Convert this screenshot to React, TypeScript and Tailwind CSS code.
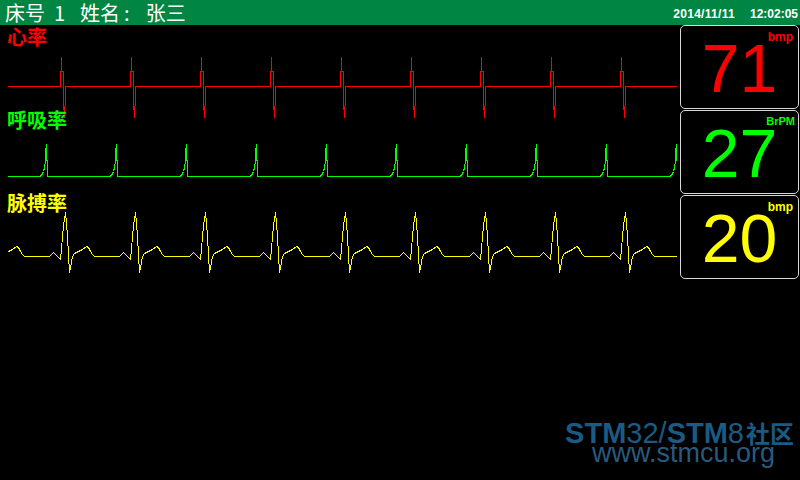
import { useMemo } from 'react'

type Pt = [number, number]

// wave shapes, x relative to each beat's anchor
const HEART_BEAT: Pt[] = [[0, 86], [0, 71], [1, 71], [1, 56], [1, 71], [3, 71], [3, 101], [4, 117], [5, 94], [5, 86]]
const RESP_BEAT: Pt[] = [[-7, 176], [-5, 175], [-4, 173], [-3, 171], [-2, 167], [-1, 160], [-1, 152], [0, 144], [0, 160], [1, 160], [1, 176]]
const PULSE_BEAT: Pt[] = [
  [-16, 256], [-12, 252], [-8, 256], [-5, 259], [-4, 248], [-2, 225], [0, 212], [2, 235], [3, 255], [4, 272],
  [6, 262], [7, 256], [9, 253], [13, 251], [17, 249], [21, 246], [23, 247], [25, 251], [27, 254], [29, 256],
]

function buildTrace(beat: Pt[], first: number, count: number, baseline: number) {
  const pts: Pt[] = [[0, baseline]]
  for (let k = 0; k < count; k++) {
    const x0 = first + k * 70
    beat.forEach(([dx, y]) => pts.push([x0 + dx, y]))
  }
  pts.push([720, baseline])
  return pts.map(([x, y]) => `${x + 0.5},${y + 0.5}`).join(' ')
}

interface TraceProps {
  id: string
  color: string
  points: string
  top: number
  height: number
}

function Trace({ id, color, points, top, height }: TraceProps) {
  return (
    <svg width={680} height={height} viewBox={`0 ${top} 680 ${height}`} className="block overflow-visible shrink-0">
      <defs>
        <clipPath id={id}>
          <rect x={8} y={-200} width={669} height={800} />
        </clipPath>
      </defs>
      <polyline
        points={points}
        fill="none"
        stroke={color}
        strokeWidth={1}
        shapeRendering="crispEdges"
        clipPath={`url(#${id})`}
      />
    </svg>
  )
}

interface ChannelProps {
  id: string
  label: string
  color: string
  points: string
  top: number
}

function Channel({ id, label, color, points, top }: ChannelProps) {
  return (
    <div className="h-[83px] flex flex-col">
      <div
        className="h-[22px] pl-[7px] text-[20px] leading-[22px] font-bold font-['Noto_Sans_CJK_SC',sans-serif]"
        style={{ color }}
      >
        {label}
      </div>
      <Trace id={id} color={color} points={points} top={top + 22} height={61} />
    </div>
  )
}

interface ValueBoxProps {
  value: string
  unit: string
  color: string
  unitRight: string
}

function ValueBox({ value, unit, color, unitRight }: ValueBoxProps) {
  return (
    <div
      className="relative h-[84px] rounded-[5px] border border-[#d8d8d8] flex justify-center pt-[17px] font-['Liberation_Sans',Arial,sans-serif]"
      style={{ color }}
    >
      <span className={`absolute top-[5px] ${unitRight} font-bold leading-none ${unit === 'BrPM' ? 'text-[11px]' : 'text-[12px]'}`}>
        {unit}
      </span>
      <span className="h-[50px] text-[68px] leading-[50px]">{value}</span>
    </div>
  )
}

export default function App() {
  const heart = useMemo(() => buildTrace(HEART_BEAT, 60, 9, 86), [])
  const resp = useMemo(() => buildTrace(RESP_BEAT, 46, 10, 176), [])
  const pulse = useMemo(() => buildTrace(PULSE_BEAT, -5, 11, 256), [])

  return (
    <div className="w-[800px] h-[480px] bg-black flex flex-col overflow-hidden select-none">
      {/* Title bar */}
      <div className="h-[25px] shrink-0 bg-[#008542] flex items-center text-white">
        <div className="flex items-center pl-[5px] text-[20px] leading-[24px] font-['Noto_Sans_CJK_SC',sans-serif]">
          <span>床号</span>
          <span className="ml-[9px]">1</span>
          <span className="ml-[15px]">姓名</span>
          <span className="ml-[4px]">:</span>
          <span className="ml-[16px]">张三</span>
        </div>
        <div className="ml-auto pr-[2px] pt-[2px] flex gap-[15px] text-[12px] font-bold font-['Liberation_Sans',Arial,sans-serif]">
          <span className="tracking-[0.3px]">2014/11/11</span>
          <span>12:02:05</span>
        </div>
      </div>

      <div className="flex">
        {/* Waveforms */}
        <div className="w-[680px] pt-[1px] flex flex-col">
          <Channel id="clip-heart" label="心率" color="#ff0000" points={heart} top={26} />
          <Channel id="clip-resp" label="呼吸率" color="#00ff00" points={resp} top={109} />
          <Channel id="clip-pulse" label="脉搏率" color="#ffff00" points={pulse} top={192} />
        </div>

        {/* Readouts */}
        <div className="w-[120px] pr-[1px] flex flex-col gap-[1px]">
          <ValueBox value="71" unit="bmp" color="#ff0000" unitRight="right-[5px]" />
          <ValueBox value="27" unit="BrPM" color="#00ff00" unitRight="right-[3px]" />
          <ValueBox value="20" unit="bmp" color="#ffff00" unitRight="right-[5px]" />
        </div>
      </div>

      {/* Site mark */}
      <div className="mt-auto pb-[17px] pr-[6px] self-end flex flex-col items-center font-['Liberation_Sans',Arial,sans-serif]">
        <div className="text-[29px] leading-[20px] text-[#1b5a82] whitespace-nowrap">
          <span className="font-bold">STM</span>
          <span>32/</span>
          <span className="font-bold">STM</span>
          <span>8</span>
          <span className="ml-[2px] font-bold text-[24px] font-['Noto_Sans_CJK_SC',sans-serif]">社区</span>
        </div>
        <div className="ml-[8px] text-[27px] leading-[20px] text-[#285a7e] whitespace-nowrap">www.stmcu.org</div>
      </div>
    </div>
  )
}
